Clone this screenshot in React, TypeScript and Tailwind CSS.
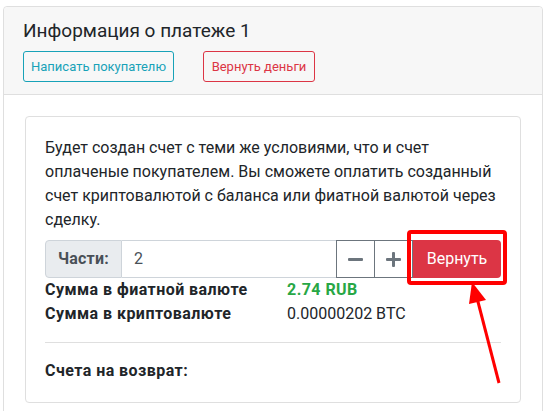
export default function App() {
  return (
    <div className="relative w-[549px] h-[411px] overflow-hidden bg-white font-['Roboto',sans-serif] text-[#212529]">
      <div className="ml-[3px] mt-[6px] w-[540px] h-[420px] border border-[#dfdfdf] rounded-[4px]">
        {/* header */}
        <div className="bg-[#f7f7f7] border-b border-[#dfdfdf] pl-[19px] pt-[12px] pb-[12px] rounded-t-[4px]">
          <h5 className="text-[19px] leading-[24px] font-normal">Информация о платеже 1</h5>
          <div className="mt-[8px] flex gap-[29px]">
            <button className="h-[31px] w-[151px] text-[13px] text-[#17a2b8] border border-[#17a2b8] rounded-[3px] bg-transparent">
              Написать покупателю
            </button>
            <button className="h-[31px] w-[112px] text-[13px] text-[#dc3545] border border-[#dc3545] rounded-[3px] bg-transparent">
              Вернуть деньги
            </button>
          </div>
        </div>

        {/* body */}
        <div className="px-[21px] pt-[21px]">
          <div className="border border-[#dfdfdf] rounded-[4px] p-[19px]">
            <p className="text-[16px] leading-[24px] mb-[8px]">
              Будет создан счет с теми же условиями, что и счет оплаченые покупателем. Вы сможете оплатить созданный счет криптовалютой с баланса или фиатной валютой через сделку.
            </p>

            <div className="flex h-[38px] text-[16px]">
              <div className="flex items-center px-[12px] bg-[#e9ecef] border border-[#ced4da] rounded-l-[4px] font-bold tracking-[0.2px] text-[#495057]">
                Части:
              </div>
              <div className="flex-1 flex items-center px-[12px] border-y border-[#ced4da] text-[#495057]">
                2
              </div>
              <button className="w-[39px] flex items-center justify-center border border-[#6c757d]">
                <svg width="15" height="15" viewBox="0 0 15 15">
                  <rect x="0" y="6" width="15" height="3" rx="1" fill="#6c757d" />
                </svg>
              </button>
              <button className="w-[38px] flex items-center justify-center border-y border-r border-[#6c757d]">
                <svg width="15" height="15" viewBox="0 0 15 15">
                  <rect x="0" y="6" width="15" height="3" rx="1" fill="#6c757d" />
                  <rect x="6" y="0" width="3" height="15" rx="1" fill="#6c757d" />
                </svg>
              </button>
              <button className="w-[88px] flex items-center justify-center bg-[#dc3545] text-white rounded-r-[4px]">
                Вернуть
              </button>
            </div>

            <div className="grid grid-cols-[242px_1fr] text-[16px] leading-[24px]">
              <div className="font-bold tracking-[0.45px]">Сумма в фиатной валюте</div>
              <div className="font-bold tracking-[0.45px] text-[#28a745]">2.74 RUB</div>
              <div className="font-bold tracking-[0.45px]">Сумма в криптовалюте</div>
              <div>0.00000202 BTC</div>
            </div>

            <hr className="my-[16px] border-t border-[#dfdfdf]" />

            <div className="font-bold tracking-[0.45px] text-[16px] leading-[24px]">Счета на возврат:</div>
          </div>
        </div>
      </div>

      {/* annotation */}
      <div className="absolute left-[407px] top-[230px] w-[100px] h-[55px] border-[4px] border-[#ff0000] rounded-[4px]" />
      <svg className="absolute left-0 top-0" width="549" height="411" viewBox="0 0 549 411">
        <line x1="499" y1="383" x2="477" y2="298" stroke="#ff0000" strokeWidth="3" />
        <polygon points="472,282 469,304 486,300" fill="#ff0000" />
      </svg>
    </div>
  );
}
